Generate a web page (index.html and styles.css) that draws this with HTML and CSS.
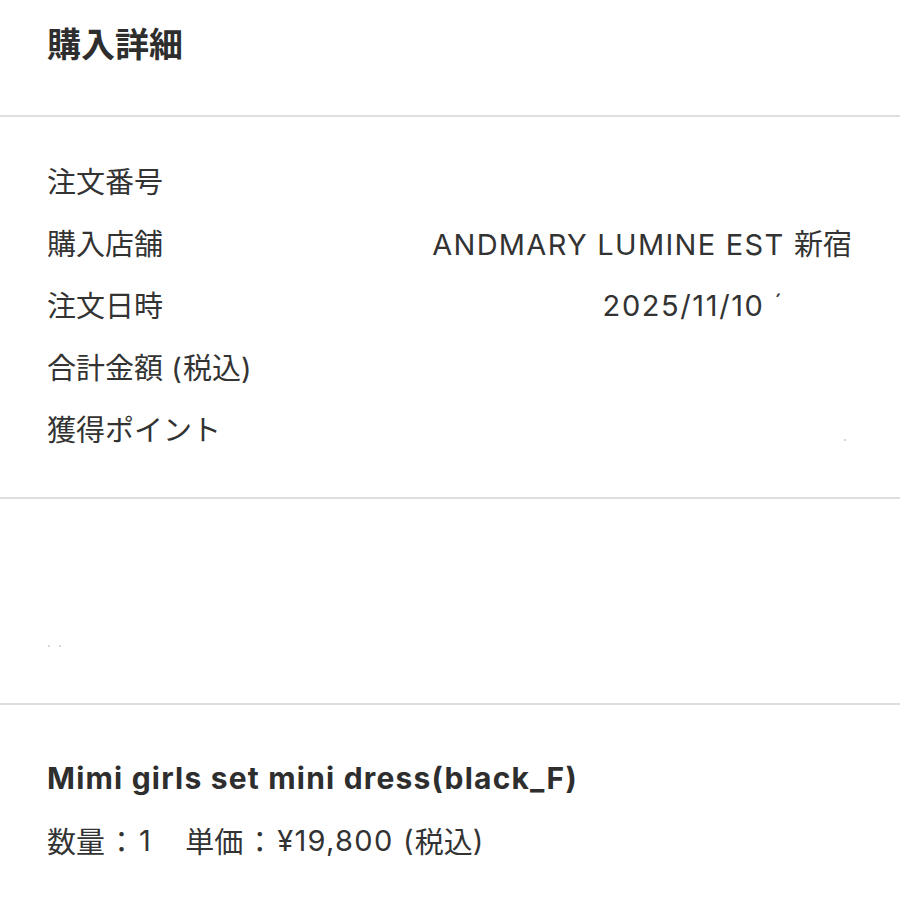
FILE: index.html
```html
<!DOCTYPE html>
<html lang="ja">
<head>
<meta charset="utf-8">
<link rel="stylesheet" href="styles.css">
</head>
<body>
<div class="page">
  <header class="header">
    <h1 class="title">購入詳細</h1>
  </header>
  <section class="details">
    <div class="row"><span class="label">注文番号</span><span class="value"></span></div>
    <div class="row"><span class="label">購入店舗</span><span class="value"><span class="lat">ANDMARY LUMINE EST </span>新宿</span></div>
    <div class="row"><span class="label">注文日時</span><span class="value value-date"><span class="lat date">2025/11/10 </span><span class="cut">´</span></span></div>
    <div class="row"><span class="label">合計金額 <span class="lat">(</span>税込<span class="lat">)</span></span><span class="value"></span></div>
    <div class="row"><span class="label">獲得ポイント</span><span class="value"><span class="speck"></span></span></div>
  </section>
  <section class="blank">
    <div class="specks"><span class="speck"></span><span class="speck"></span></div>
  </section>
  <section class="product">
    <div class="product-name">Mimi girls set mini dress(black_F)</div>
    <div class="product-meta">数量<span class="colon">：</span><span class="lat">1</span><span class="gap"></span>単価<span class="colon">：</span><span class="lat">¥19,800 (</span>税込<span class="lat">)</span></div>
  </section>
</div>
</body>
</html>
```

FILE: styles.css
```css
* { box-sizing: border-box; }
html, body { margin: 0; padding: 0; background: #ffffff; }
body {
  font-family: Inter, "Noto Sans CJK JP", sans-serif;
  color: #333333;
  width: 900px;
  height: 900px;
  overflow: hidden;
}
.page { display: flex; flex-direction: column; }
.header {
  height: 117px;
  border-bottom: 2px solid #dedede;
  padding: 0 47px;
  display: flex;
  align-items: flex-start;
}
.title {
  margin: 0;
  margin-top: 23px;
  font-size: 34px;
  line-height: 40px;
  font-weight: 700;
  font-family: "Noto Sans CJK JP", sans-serif;
  color: #2e2e2e;
}
.details {
  height: 382px;
  border-bottom: 2px solid #dedede;
  padding: 35px 48px 35px 47px;
  display: flex;
  flex-direction: column;
}
.row {
  height: 62px;
  display: flex;
  align-items: center;
  justify-content: space-between;
  font-size: 29px;
}
.label { color: #333; }
.label, .value { line-height: 36px; white-space: pre; }
.value { color: #333; }
.lat { letter-spacing: 1.3px; }
.date { letter-spacing: 1.6px; }
.value-date { padding-right: 70px; }
.cut { font-size: 24px; position: relative; top: -4px; }
.blank {
  height: 206px;
  border-bottom: 2px solid #dedede;
  padding-left: 48px;
  padding-top: 146px;
}
.specks { display: flex; gap: 9px; }
.speck {
  display: inline-block;
  width: 2px;
  height: 2px;
  background: #c8c8c8;
  border-radius: 1px;
}
.details .speck { margin-right: 6px; margin-top: 4px; }
.product {
  padding: 42px 47px 0;
  display: flex;
  flex-direction: column;
}
.product-name {
  height: 62px;
  display: flex;
  align-items: center;
  font-size: 30px;
  font-weight: 700;
  letter-spacing: 1.2px;
  color: #2e2e2e;
}
.product-meta {
  height: 62px;
  display: flex;
  align-items: center;
  font-size: 29px;
  color: #333;
  white-space: pre;
}
.colon { padding: 0 3px 0 2px; }
.gap { width: 33px; }
```
